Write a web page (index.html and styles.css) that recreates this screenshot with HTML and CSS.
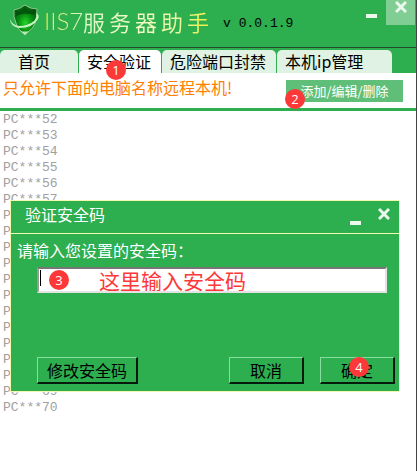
FILE: index.html
```html
<!DOCTYPE html>
<html lang="zh-CN">
<head>
<meta charset="UTF-8">
<title>IIS7服务器助手</title>
<link rel="stylesheet" href="styles.css">
</head>
<body>
<div class="window">
	<div class="header">
		<svg class="logo" width="32" height="32" viewBox="0 0 32 32">
			<defs>
				<radialGradient id="shine" cx="0.5" cy="0.6" r="0.6">
					<stop offset="0" stop-color="#25d52b"/>
					<stop offset="0.5" stop-color="#078e12"/>
					<stop offset="1" stop-color="#04500c"/>
				</radialGradient>
			</defs>
			<path d="M6 6 Q12 5 17 1 Q22 5 29 5 Q29 13 27 19 Q25 25 21 27 L17 31 L13 27 Q9 25 8 19 Q5 13 6 6Z" fill="url(#shine)" stroke="#8fc98e" stroke-width="1"/>
			<path d="M8 8 Q13 7 17 4 Q21 7 27 7 L26 11 Q17 8 8 12Z" fill="#02460b" opacity="0.7"/>
			<path d="M2 15 Q2 22 11 24 Q25 24 30 15 Q32 11 28 9 Q30 13 26 17 Q20 22 11 22 Q4 21 2 15Z" fill="#c8f5c4"/>
			<path d="M12 27 L17 31 L21 27 Q17 28 12 27Z" fill="#b9e7b4"/>
		</svg>
		<h1 class="brand"><span class="en">IIS7</span><span>服</span><span>务</span><span>器</span><span>助</span><span>手</span></h1>
		<span class="version">v 0.0.1.9</span>
		<button class="ctl min" aria-label="最小化"><svg width="11" height="4"><path d="M0 0H11V4H0Z"/></svg></button>
		<button class="ctl close" aria-label="关闭"><svg width="12" height="12" viewBox="0 0 12 12"><path d="M1 1L11 11M11 1L1 11"/></svg></button>
	</div>
	<div class="tabs">
		<button class="tab home">首页</button>
		<button class="tab active">安全验证<i class="badge b1">1</i></button>
		<button class="tab port">危险端口封禁</button>
		<button class="tab ip">本机ip管理</button>
	</div>
	<div class="notice">
		<p>只允许下面的电脑名称远程本机!</p>
		<button class="edit">添加/编辑/删除<i class="badge b2">2</i></button>
	</div>
	<div class="content">
		<ul class="list">
			<li>PC***52</li>
			<li>PC***53</li>
			<li>PC***54</li>
			<li>PC***55</li>
			<li>PC***56</li>
			<li>PC***57</li>
			<li>PC***58</li>
			<li>PC***59</li>
			<li>PC***60</li>
			<li>PC***61</li>
			<li>PC***62</li>
			<li>PC***63</li>
			<li>PC***64</li>
			<li>PC***65</li>
			<li>PC***66</li>
			<li>PC***67</li>
			<li>PC***68</li>
			<li>PC***69</li>
			<li>PC***70</li>
		</ul>
		<!-- 验证安全码弹窗 -->
		<form class="dialog">
			<div class="dialog_title">
				<h2>验证安全码</h2>
				<button type="button" class="ctl min" aria-label="最小化"><svg width="11" height="4"><path d="M0 0H11V4H0Z"/></svg></button>
				<button type="button" class="ctl close" aria-label="关闭"><svg width="12" height="12" viewBox="0 0 12 12"><path d="M1 1L11 11M11 1L1 11"/></svg></button>
			</div>
			<label for="code">请输入您设置的安全码：</label>
			<div class="field">
				<input type="text" id="code" placeholder="这里输入安全码">
				<i class="caret"></i>
				<i class="badge b3">3</i>
			</div>
			<div class="btns">
				<button type="button" class="btn change">修改安全码</button>
				<button type="button" class="btn">取消</button>
				<button type="button" class="btn">确定<i class="badge b4">4</i></button>
			</div>
		</form>
	</div>
</div>
</body>
</html>
```
FILE: styles.css
```css
*{
	box-sizing: border-box;
}
body{
	margin: 0;
	background: #fff;
	font-family: "Noto Sans CJK SC", sans-serif;
	font-size: 16px;
}
h1, h2, p, ul{
	margin: 0;
	padding: 0;
	font-weight: normal;
}
button{
	font-family: inherit;
	padding: 0;
	border: none;
}
.window{
	display: flex;
	flex-direction: column;
	min-height: 100vh;
	margin-right: 2px;
	border-right: 1px solid #444;
}
.header{
	display: flex;
	height: 48px;
	padding: 0 1px 0 8px;
	background: #2dae4f;
	border-bottom: 1px solid #26492f;
}
.logo{
	margin-top: 4px;
}
.brand{
	display: flex;
	gap: 4px;
	margin-left: 4px;
	font-size: 22px;
	line-height: 42px;
	color: transparent;
	background: linear-gradient(100deg, #f0e84a, #d8f7c8 25%, #f4fbc0 60%, #e8f7a0 80%, #f6ee30);
	background-clip: text;
	-webkit-background-clip: text;
}
.brand .en{
	width: 35px;
	font-family: Lato, sans-serif;
	font-size: 24px;
	font-weight: 300;
}
.version{
	flex: 1;
	margin-left: 14px;
	font-family: "Liberation Mono", monospace;
	font-size: 13px;
	line-height: 48px;
}
.ctl{
	display: flex;
	justify-content: center;
	background: none;
}
.ctl path{
	fill: #eaf8ed;
	stroke: none;
}
.ctl.close path{
	fill: none;
	stroke: #eaf8ed;
	stroke-width: 3;
}
.header .min{
	width: 11px;
	margin-right: 9px;
	padding-top: 14px;
}
.header .close{
	width: 29px;
	height: 25px;
	padding-top: 1px;
	background: #81ce95;
}
.tabs{
	display: flex;
	gap: 1px;
	height: 25px;
	padding-top: 2px;
	background: #2dae4f;
}
.tab{
	position: relative;
	padding: 0 8px;
	font-size: 16px;
	line-height: 23px;
	text-align: left;
	white-space: nowrap;
	background: #dff2e4;
	border-radius: 5px 5px 0 0;
}
.tab.active{
	width: 82px;
	background: #fff;
}
.tab.home{
	width: 78px;
	padding-left: 18px;
}
.port{
	width: 114px;
}
.ip{
	width: 115px;
}
.badge{
	position: absolute;
	width: 20px;
	height: 20px;
	border-radius: 50%;
	background: #fd3838;
	color: #fff;
	font-family: "Open Sans", sans-serif;
	font-size: 13px;
	font-style: normal;
	line-height: 20px;
	text-align: center;
	z-index: 1;
}
.b1{
	left: 27px;
	top: 10px;
}
.b2{
	left: -1px;
	top: 9px;
}
.notice{
	display: flex;
	justify-content: space-between;
	height: 38px;
	padding: 0 13px 0 3px;
	border-bottom: 3px solid #2dae4f;
}
.notice p{
	color: #ff8000;
	line-height: 28px;
}
.edit{
	position: relative;
	width: 117px;
	height: 22px;
	margin-top: 7px;
	background: #5fbf79;
	color: #fff;
	font-size: 13px;
	line-height: 22px;
}
.content{
	position: relative;
	flex: 1;
	padding: 1px 3px;
}
.list{
	list-style: none;
	color: #a0a0a0;
	font-family: "Liberation Mono", monospace;
	font-size: 13px;
	line-height: 16px;
}
.dialog{
	position: absolute;
	top: 89px;
	left: 10px;
	right: 16px;
	background: #2dae4f;
	border: 1px solid #f3f8b0;
}
.dialog_title{
	display: flex;
	height: 33px;
	padding: 0 9px 0 14px;
	border-bottom: 1px solid #f3f8b0;
}
.dialog h2{
	flex: 1;
	color: #fff;
	font-size: 16px;
	line-height: 27px;
}
.dialog .min{
	margin-right: 17px;
	padding-top: 20px;
}
.dialog .close{
	padding-top: 7px;
}
.dialog label{
	display: block;
	padding-left: 6px;
	color: #fff;
	line-height: 32px;
}
.field{
	position: relative;
	margin: 1px 12px 0 26px;
}
.field input{
	display: block;
	width: 100%;
	height: 26px;
	padding: 0 0 0 60px;
	border: 2px solid;
	border-color: #777 #e3e3e3 #e3e3e3 #999;
	background: #fff;
	font-family: inherit;
	font-size: 21px;
}
.field input::placeholder{
	color: #fd3838;
}
.caret{
	position: absolute;
	left: 3px;
	top: 3px;
	width: 1px;
	height: 16px;
	background: #000;
}
.b3{
	left: 12px;
	top: 3px;
}
.btns{
	display: flex;
	gap: 16px;
	margin: 64px 4px 7px 26px;
}
.btn{
	position: relative;
	width: 75px;
	height: 27px;
	background: #2dae4f;
	border: solid #000;
	border-width: 1px 2px 2px 1px;
	border-color: #86dd9e #061a0b #061a0b #86dd9e;
	font-size: 16px;
	line-height: 22px;
}
.change{
	width: 101px;
	margin-right: auto;
}
.b4{
	left: 28px;
	top: -1px;
}
```
